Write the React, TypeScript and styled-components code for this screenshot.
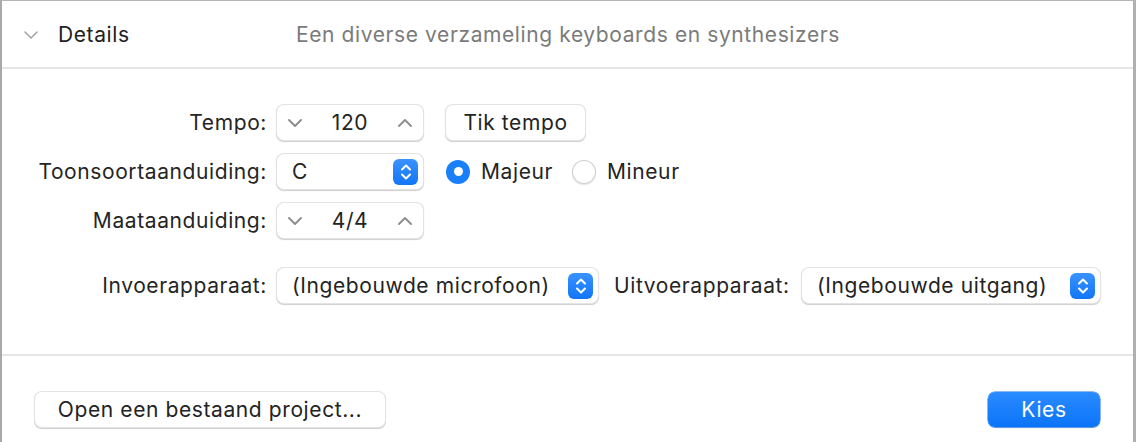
import styled, { createGlobalStyle } from "styled-components";

const GlobalStyle = createGlobalStyle`
  html, body {
    margin: 0;
    padding: 0;
    background: #ffffff;
  }
  body {
    font-family: Inter, "Noto Sans", "Liberation Sans", sans-serif;
    font-size: 21px;
    letter-spacing: 0.6px;
    color: #262626;
    -webkit-font-smoothing: antialiased;
  }
`;

const Window = styled.div`
  width: 1136px;
  height: 442px;
  box-sizing: border-box;
  border-top: 1px solid #b4b4b4;
  border-left: 2px solid #a9a9a9;
  border-right: 3px solid #b0b0b0;
  background: #ffffff;
  overflow: hidden;
`;

const Header = styled.div`
  display: flex;
  align-items: center;
  height: 68px;
  padding-top: 1px;
  border-bottom: 2px solid #e6e6e6;
  box-sizing: border-box;
`;

const Disclosure = styled.svg`
  margin-left: 21px;
  width: 16px;
  height: 10px;
  flex: none;
`;

const Title = styled.div`
  margin-left: 19px;
  width: 238px;
  color: #222222;
`;

const Subtitle = styled.div`
  color: #7b7b7b;
`;

const Form = styled.div`
  display: flex;
  flex-direction: column;
  gap: 14px;
  padding: 36px 0 51px;
  border-bottom: 2px solid #e6e6e6;
`;

const Row = styled.div<{ $top?: number }>`
  display: flex;
  align-items: center;
  height: 35px;
  margin-top: ${(p) => p.$top ?? 0}px;
`;

const Label = styled.div<{ $width?: number; $gap?: number }>`
  width: ${(p) => p.$width ?? 265}px;
  margin-right: ${(p) => p.$gap ?? 10}px;
  text-align: right;
  white-space: nowrap;
  color: #252525;
`;

const Control = styled.div<{ $width: number; $gap?: number }>`
  width: ${(p) => p.$width}px;
  height: 35px;
  margin-right: ${(p) => p.$gap ?? 0}px;
  box-sizing: border-box;
  display: flex;
  align-items: center;
  background: #ffffff;
  border-radius: 7px;
  box-shadow: 0 0 0 1px #e3e3e3, 0 1px 1px 0.5px #cfcfcf;
  color: #232323;
  flex: none;
`;

const StepValue = styled.span`
  flex: 1;
  text-align: center;
`;

const Chevron = styled.svg`
  width: 16px;
  height: 10px;
  margin: 0 10px;
  flex: none;
`;

const PopupText = styled.span`
  flex: 1;
  padding-left: 15px;
  white-space: nowrap;
`;

const PopupArrows = styled.div`
  width: 25px;
  height: 26px;
  margin-right: 5px;
  border-radius: 6px;
  background: linear-gradient(#3a92ff, #1176f7);
  display: flex;
  align-items: center;
  justify-content: center;
`;

const PushButton = styled.button<{ $primary?: boolean; $width: number }>`
  width: ${(p) => p.$width}px;
  height: 35px;
  border: none;
  border-radius: 7px;
  font-family: inherit;
  font-size: inherit;
  letter-spacing: inherit;
  padding: 0;
  flex: none;
  color: ${(p) => (p.$primary ? "#ffffff" : "#232323")};
  background: ${(p) =>
    p.$primary ? "linear-gradient(#2b8bff, #0a74f8)" : "#ffffff"};
  box-shadow: ${(p) =>
    p.$primary
      ? "0 0 0 0.5px #1c74e6, 0 1px 1px 0 #9dbde8"
      : "0 0 0 1px #e3e3e3, 0 1px 1px 0.5px #cfcfcf"};
`;

const RadioGroup = styled.div`
  display: flex;
  align-items: center;
`;

const RadioOption = styled.label<{ $gap?: number }>`
  display: flex;
  align-items: center;
  gap: 11px;
  margin-right: ${(p) => p.$gap ?? 0}px;
  color: #242424;
`;

const RadioDot = styled.span<{ $checked?: boolean }>`
  width: 24px;
  height: 24px;
  box-sizing: border-box;
  border-radius: 50%;
  display: flex;
  align-items: center;
  justify-content: center;
  background: ${(p) => (p.$checked ? "#1a7ffb" : "#ffffff")};
  box-shadow: ${(p) =>
    p.$checked ? "none" : "inset 0 0 0 1px #cdcdcd, 0 1px 1px #e2e2e2"};
  &::after {
    content: "";
    display: ${(p) => (p.$checked ? "block" : "none")};
    width: 9px;
    height: 9px;
    border-radius: 50%;
    background: #ffffff;
  }
`;

const Footer = styled.div`
  display: flex;
  justify-content: space-between;
  align-items: center;
  padding: 36px 33px 0 33px;
`;

function DownChevron() {
  return (
    <Chevron viewBox="0 0 16 10">
      <path d="M2 2 L8 8 L14 2" fill="none" stroke="#8d8d8d" strokeWidth="1.9" strokeLinecap="round" strokeLinejoin="round" />
    </Chevron>
  );
}

function UpChevron() {
  return (
    <Chevron viewBox="0 0 16 10">
      <path d="M2 8 L8 2 L14 8" fill="none" stroke="#8d8d8d" strokeWidth="1.9" strokeLinecap="round" strokeLinejoin="round" />
    </Chevron>
  );
}

function Stepper({ value }: { value: string }) {
  return (
    <Control $width={146} $gap={23}>
      <DownChevron />
      <StepValue>{value}</StepValue>
      <UpChevron />
    </Control>
  );
}

function Popup({ value, width, gap }: { value: string; width: number; gap?: number }) {
  return (
    <Control $width={width} $gap={gap}>
      <PopupText>{value}</PopupText>
      <PopupArrows>
        <svg width="12" height="18" viewBox="0 0 12 18">
          <path
            d="M2 6.5 L6 2.5 L10 6.5 M2 11.5 L6 15.5 L10 11.5"
            fill="none"
            stroke="#ffffff"
            strokeWidth="2"
            strokeLinecap="round"
            strokeLinejoin="round"
          />
        </svg>
      </PopupArrows>
    </Control>
  );
}

export default function App() {
  return (
    <>
      <GlobalStyle />
      <Window>
        <Header>
          <Disclosure viewBox="0 0 16 10">
            <path d="M2 2 L8 8 L14 2" fill="none" stroke="#a5a5a5" strokeWidth="1.6" strokeLinecap="round" strokeLinejoin="round" />
          </Disclosure>
          <Title>Details</Title>
          <Subtitle>Een diverse verzameling keyboards en synthesizers</Subtitle>
        </Header>
        <Form>
          <Row>
            <Label>Tempo:</Label>
            <Stepper value="120" />
            <PushButton $width={139}>Tik tempo</PushButton>
          </Row>
          <Row>
            <Label>Toonsoortaanduiding:</Label>
            <Popup value="C" width={146} gap={23} />
            <RadioGroup>
              <RadioOption $gap={19}>
                <RadioDot $checked />
                Majeur
              </RadioOption>
              <RadioOption>
                <RadioDot />
                Mineur
              </RadioOption>
            </RadioGroup>
          </Row>
          <Row>
            <Label>Maataanduiding:</Label>
            <Stepper value="4/4" />
          </Row>
          <Row $top={16}>
            <Label>Invoerapparaat:</Label>
            <Popup value="(Ingebouwde microfoon)" width={321} gap={16} />
            <Label $width={173} $gap={15}>Uitvoerapparaat:</Label>
            <Popup value="(Ingebouwde uitgang)" width={298} />
          </Row>
        </Form>
        <Footer>
          <PushButton $width={350}>Open een bestaand project...</PushButton>
          <PushButton $primary $width={112}>Kies</PushButton>
        </Footer>
      </Window>
    </>
  );
}
